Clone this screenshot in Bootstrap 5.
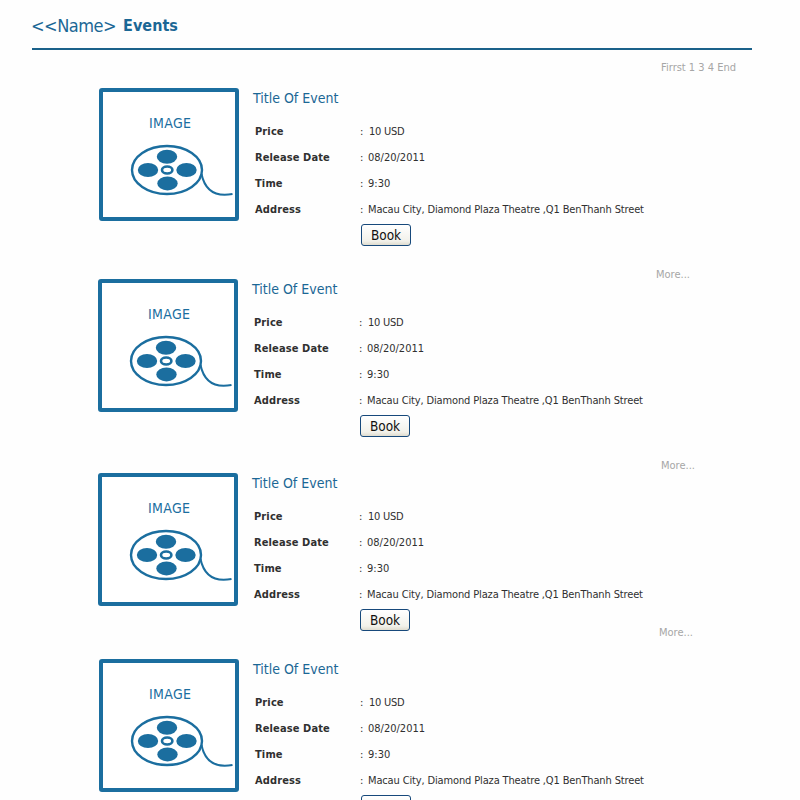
<!DOCTYPE html>
<html lang="en">
<head>
<meta charset="utf-8">
<meta name="viewport" content="width=device-width, initial-scale=1">
<title>Events</title>
<link href="https://cdn.jsdelivr.net/npm/bootstrap@5.3.0/dist/css/bootstrap.min.css" rel="stylesheet">
<style>
html{overflow:hidden}
body{font-family:"DejaVu Sans Condensed","DejaVu Sans",sans-serif;font-stretch:condensed;font-size:11px;line-height:14px;color:#303030;background:#fefefe;height:800px;overflow:hidden}
.page{width:720px;height:800px;overflow:hidden;margin-left:32px}
.page-head{height:50px;padding-top:14px;border-bottom:2px solid #1a618a;color:#1b6795;line-height:24px}
.page-name{font-size:18px;width:91px;letter-spacing:-.5px;margin-left:-1px;margin-right:1px}
.page-title{font-size:16px;font-weight:700;line-height:24px;letter-spacing:.05px}
.pager{height:38px;padding:11px 16px 0 0}
.soft{color:#a6a6a6}
.event{height:191px;padding-left:66px}
.event.in{padding-left:67px}
.h-b{height:194px}.h-c{height:186px}
.thumb{width:140px;height:133px;border:4px solid #1b6e9f;border-radius:3px;background:#fff;color:#1b6e9f;flex:none}
.thumb svg{display:block;width:132px;height:125px}
.info{margin-left:14px;width:403px;flex:none}
.info h2{font-size:14px;line-height:18px;margin:1px 0 15px;color:#1b6795;font-weight:400}
.line{height:26px;line-height:20px;white-space:nowrap}
.line dt{width:107px;padding-left:2px;flex:none;letter-spacing:.12px}
.line dd{width:8px;flex:none;margin:0}
.line dd + dd{width:auto}
.line .v1{margin-left:1px;letter-spacing:-.25px}
.line .addr{letter-spacing:-.14px}
.btn-book{width:50px;height:22px;margin:-2px 0 0 108px;padding:0;border:1px solid #17497b;border-radius:3px;background:linear-gradient(#fff,#f2f1ea 80%,#dfdccf);font-size:13.5px;line-height:20px;color:#111;display:block}
.more{margin-top:180px}
.m1{margin-left:0}.m2{margin-left:6px}.m3{margin-left:4px;margin-top:153px}
</style>
<script src="https://cdn.jsdelivr.net/npm/bootstrap@5.3.0/dist/js/bootstrap.bundle.min.js"></script>
</head>
<body>
<svg class="d-none" xmlns="http://www.w3.org/2000/svg">
<symbol id="reel" viewBox="0 0 132 125">
<text x="67" y="35.500" text-anchor="middle" font-size="14" fill="#1b6e9f" textLength="42">IMAGE</text>
<ellipse cx="64" cy="78" rx="35" ry="24" fill="none" stroke="#1b6e9f" stroke-width="2.4"/>
<g fill="#1b6e9f"><ellipse cx="64" cy="64.700" rx="10.200" ry="7"/><ellipse cx="45" cy="78" rx="10.200" ry="7"/><ellipse cx="83.500" cy="78" rx="10.200" ry="7"/><ellipse cx="64.500" cy="91.400" rx="10.200" ry="7"/></g>
<ellipse cx="64.200" cy="78" rx="5.200" ry="3.500" fill="none" stroke="#1b6e9f" stroke-width="2.600"/>
<path d="M98.500 82C101 94 108 106 129.500 102" fill="none" stroke="#1b6e9f" stroke-width="2"/>
</symbol>
</svg>
<main class="page">
<header class="page-head d-flex"><span class="page-name">&lt;&lt;Name&gt;</span><h1 class="page-title mb-0">Events</h1></header>
<nav class="pager soft text-end"><span>Firrst 1 3 4 End</span></nav>

<article class="event in d-flex">
<div class="thumb"><svg><use href="#reel"/></svg></div>
<div class="info"><h2>Title Of Event</h2>
<dl class="mb-0">
<div class="line d-flex"><dt>Price</dt><dd>:</dd><dd class="v1">10 USD</dd></div>
<div class="line d-flex"><dt>Release Date</dt><dd>:</dd><dd>08/20/2011</dd></div>
<div class="line d-flex"><dt>Time</dt><dd>:</dd><dd>9:30</dd></div>
<div class="line d-flex"><dt>Address</dt><dd>:</dd><dd class="addr">Macau City, Diamond Plaza Theatre ,Q1 BenThanh Street</dd></div>
</dl><button class="btn btn-book" type="button">Book</button></div>
<div class="soft more m1">More...</div>
</article>

<article class="event h-b d-flex">
<div class="thumb"><svg><use href="#reel"/></svg></div>
<div class="info"><h2>Title Of Event</h2>
<dl class="mb-0">
<div class="line d-flex"><dt>Price</dt><dd>:</dd><dd class="v1">10 USD</dd></div>
<div class="line d-flex"><dt>Release Date</dt><dd>:</dd><dd>08/20/2011</dd></div>
<div class="line d-flex"><dt>Time</dt><dd>:</dd><dd>9:30</dd></div>
<div class="line d-flex"><dt>Address</dt><dd>:</dd><dd class="addr">Macau City, Diamond Plaza Theatre ,Q1 BenThanh Street</dd></div>
</dl><button class="btn btn-book" type="button">Book</button></div>
<div class="soft more m2">More...</div>
</article>

<article class="event h-c d-flex">
<div class="thumb"><svg><use href="#reel"/></svg></div>
<div class="info"><h2>Title Of Event</h2>
<dl class="mb-0">
<div class="line d-flex"><dt>Price</dt><dd>:</dd><dd class="v1">10 USD</dd></div>
<div class="line d-flex"><dt>Release Date</dt><dd>:</dd><dd>08/20/2011</dd></div>
<div class="line d-flex"><dt>Time</dt><dd>:</dd><dd>9:30</dd></div>
<div class="line d-flex"><dt>Address</dt><dd>:</dd><dd class="addr">Macau City, Diamond Plaza Theatre ,Q1 BenThanh Street</dd></div>
</dl><button class="btn btn-book" type="button">Book</button></div>
<div class="soft more m3">More...</div>
</article>

<article class="event in d-flex">
<div class="thumb"><svg><use href="#reel"/></svg></div>
<div class="info"><h2>Title Of Event</h2>
<dl class="mb-0">
<div class="line d-flex"><dt>Price</dt><dd>:</dd><dd class="v1">10 USD</dd></div>
<div class="line d-flex"><dt>Release Date</dt><dd>:</dd><dd>08/20/2011</dd></div>
<div class="line d-flex"><dt>Time</dt><dd>:</dd><dd>9:30</dd></div>
<div class="line d-flex"><dt>Address</dt><dd>:</dd><dd class="addr">Macau City, Diamond Plaza Theatre ,Q1 BenThanh Street</dd></div>
</dl><button class="btn btn-book" type="button" aria-label="Book"></button></div>
</article>
</main>
</body>
</html>
